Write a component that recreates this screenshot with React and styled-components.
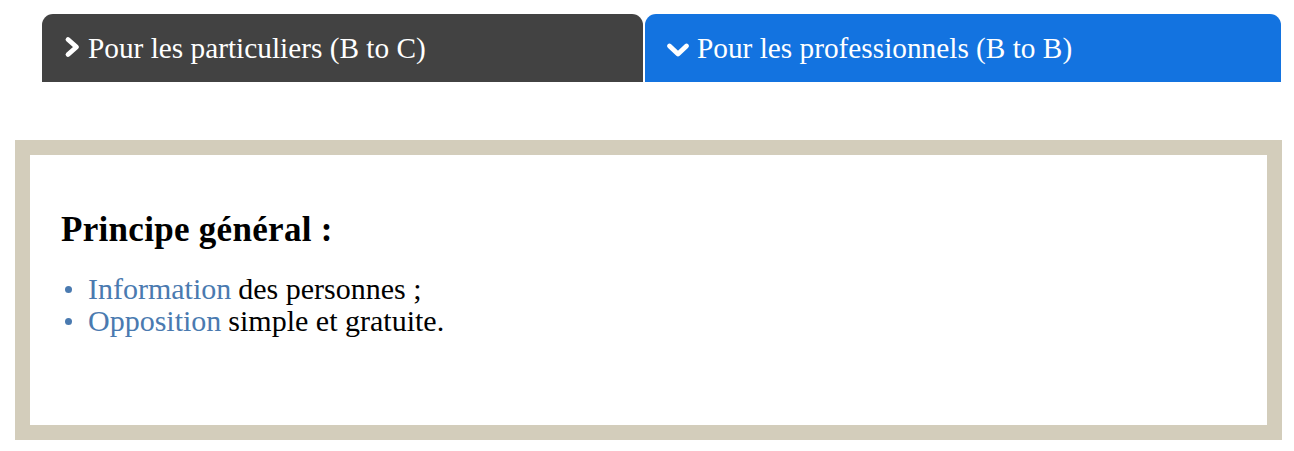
import React from "react";
import styled, { createGlobalStyle } from "styled-components";

const Global = createGlobalStyle`
  html, body { margin: 0; padding: 0; background: #fff; }
  body { font-family: "Liberation Serif", "DejaVu Serif", serif; }
`;

const Page = styled.div`
  width: 1294px;
  height: 451px;
  box-sizing: border-box;
  padding: 14px 12px 0 15px;
`;

const Tabs = styled.div`
  display: grid;
  grid-template-columns: 601px 636px;
  gap: 2px;
  margin-left: 27px;
  height: 68px;
`;

const Tab = styled.div`
  display: flex;
  align-items: center;
  gap: 7px;
  padding-left: ${(p) => p.$pad}px;
  border-radius: 11px 11px 0 0;
  background: ${(p) => (p.$active ? "#1373e0" : "#424242")};
  color: #fff;
  font-size: 29.3px;
  line-height: 34px;
  white-space: nowrap;
`;

const Icon = styled.svg`
  flex: none;
  display: block;
  margin-top: ${(p) => p.$dy}px;
`;

const Box = styled.div`
  margin-top: 58px;
  height: 300px;
  box-sizing: border-box;
  border: 15px solid #d3cdbb;
  background: #fff;
  padding: 55px 31px 0;
`;

const Heading = styled.h3`
  margin: 0 0 23px;
  font-size: 35px;
  font-weight: bold;
  line-height: 40px;
  letter-spacing: 0.3px;
  color: #000;
`;

const List = styled.ul`
  margin: 0;
  padding: 0;
  list-style: none;
`;

const Item = styled.li`
  display: flex;
  align-items: center;
  font-size: 30px;
  line-height: 32px;
  color: #000;
  white-space: nowrap;
  &::before {
    content: "";
    width: 7px;
    height: 7px;
    border-radius: 50%;
    background: #4a7ab0;
    margin: 0 16px 0 4px;
    flex: none;
  }
`;

const Link = styled.a`
  color: #4a7ab0;
  text-decoration: none;
  margin-right: 7px;
`;

export default function App() {
  return (
    <>
      <Global />
      <Page>
        <Tabs>
          <Tab $pad={22}>
            <Icon $dy={-2} width="17" height="22" viewBox="0 0 17 22">
              <path d="M4 3.5 L12.5 11 L4 18.5" fill="none" stroke="#fff" strokeWidth="4.8" strokeLinecap="round" strokeLinejoin="round" />
            </Icon>
            Pour les particuliers (B to C)
          </Tab>
          <Tab $active $pad={21}>
            <Icon $dy={4} width="24" height="16" viewBox="0 0 24 16">
              <path d="M3.5 4 L12 12 L20.5 4" fill="none" stroke="#fff" strokeWidth="4.8" strokeLinecap="round" strokeLinejoin="round" />
            </Icon>
            Pour les professionnels (B to B)
          </Tab>
        </Tabs>
        <Box>
          <Heading>Principe général :</Heading>
          <List>
            <Item>
              <Link href="#">Information</Link>des personnes ;
            </Item>
            <Item>
              <Link href="#">Opposition</Link>simple et gratuite.
            </Item>
          </List>
        </Box>
      </Page>
    </>
  );
}
